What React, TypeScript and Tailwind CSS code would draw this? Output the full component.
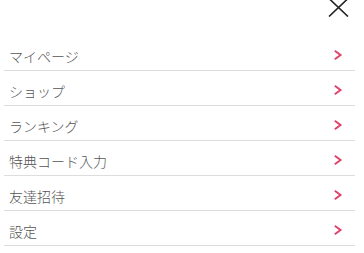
import React from "react";

const items = ["マイページ", "ショップ", "ランキング", "特典コード入力", "友達招待", "設定"];

function Chevron() {
  return (
    <svg width="10" height="12" viewBox="0 0 10 12" fill="none" className="shrink-0 mt-[3px]">
      <path d="M1.8 1.8 L7.5 6 L1.8 10.2" stroke="#e0436b" strokeWidth="2" strokeLinejoin="miter" />
    </svg>
  );
}

export default function App() {
  return (
    <div
      className="w-[364px] h-[253px] bg-white overflow-hidden"
      style={{ fontFamily: '"Noto Sans CJK JP", "Noto Sans", sans-serif' }}
    >
      <header className="h-[36px] flex justify-end items-start pr-[15px]">
        <button aria-label="close" className="mt-[-2px]">
          <svg width="21" height="19" viewBox="0 0 21 19" fill="none">
            <path d="M1 0.5 L20 18.5 M20 0.5 L1 18.5" stroke="#222" strokeWidth="1.6" />
          </svg>
        </button>
      </header>
      <ul className="ml-[4px] w-[351px]">
        {items.map((label) => (
          <li
            key={label}
            className="h-[35px] border-b border-[#dddddd] flex items-center justify-between pl-[5px] pr-[12px]"
          >
            <span className="text-[14px] text-[#555] leading-none font-light mt-[5px]">{label}</span>
            <Chevron />
          </li>
        ))}
      </ul>
    </div>
  );
}
